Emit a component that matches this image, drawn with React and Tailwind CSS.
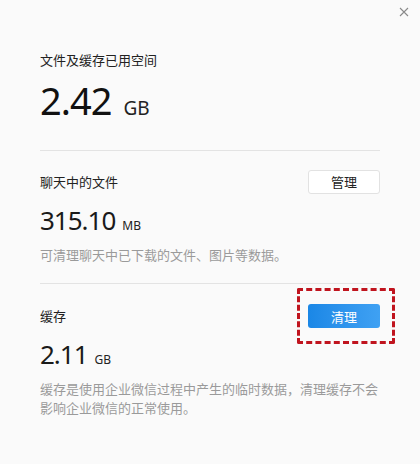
import React from 'react';

const cjk = { fontFamily: '"Noto Sans CJK SC", "Noto Sans", sans-serif' };
const num = { fontFamily: '"Noto Sans", "Noto Sans CJK SC", sans-serif' };

const Divider = () => <div className="h-px bg-[#e3e3e3]" />;

const CloseIcon = () => (
  <svg width="10" height="10" viewBox="0 0 10 10" fill="none" stroke="#8a8a8a" strokeWidth="1.1">
    <path d="M1 1L9 9M9 1L1 9" />
  </svg>
);

const Section = ({ title, value, unit, action, desc }) => (
  <div className="flex flex-col">
    <div className="flex items-center justify-between h-[24px]">
      <span className="text-[13px] text-[#222]" style={cjk}>{title}</span>
      {action}
    </div>
    <div className="flex items-baseline mt-[13px] leading-none" style={num}>
      <span className="text-[26px] tracking-[-1px] text-[#1a1a1a]">{value}</span>
      <span className="text-[12px] text-[#222] ml-[7px]">{unit}</span>
    </div>
    <p className="mt-[12px] text-[13px] leading-[19px] text-[#9a9a9a]" style={cjk}>{desc}</p>
  </div>
);

export default function App() {
  return (
    <div className="w-[420px] h-[464px] bg-[#fafafa] flex flex-col">
      <div className="flex justify-end h-[24px] pt-[7px] pr-[11px]">
        <CloseIcon />
      </div>
      <div className="flex flex-col px-10">
        <span className="mt-[26px] text-[13px] leading-[20px] text-[#222]" style={cjk}>文件及缓存已用空间</span>
        <div className="flex items-baseline mt-[11px] leading-none" style={num}>
          <span className="text-[38px] tracking-[-1px] text-[#111]">2.42</span>
          <span className="text-[19px] text-[#222] ml-[12px]">GB</span>
        </div>
        <div className="mt-[31px]"><Divider /></div>
        <div className="mt-[19px]">
          <Section
            title="聊天中的文件"
            value="315.10"
            unit="MB"
            action={
              <button className="w-[72px] h-[24px] bg-white border border-[#e2e2e2] rounded-[3px] text-[13px] text-[#222]" style={cjk}>管理</button>
            }
            desc="可清理聊天中已下载的文件、图片等数据。"
          />
        </div>
        <div className="mt-[19px]"><Divider /></div>
        <div className="mt-[20px]">
          <Section
            title="缓存"
            value="2.11"
            unit="GB"
            action={
              <div className="relative">
                <button className="w-[72px] h-[24px] rounded-[3px] text-[13px] text-white bg-gradient-to-r from-[#1a87e6] to-[#3fa1f3]" style={cjk}>清理</button>
                <div className="absolute -left-[11px] -top-[16px] w-[98px] h-[56px] border-[3px] border-dashed border-[#c0141e] rounded-[2px]" />
              </div>
            }
            desc="缓存是使用企业微信过程中产生的临时数据，清理缓存不会影响企业微信的正常使用。"
          />
        </div>
      </div>
    </div>
  );
}
